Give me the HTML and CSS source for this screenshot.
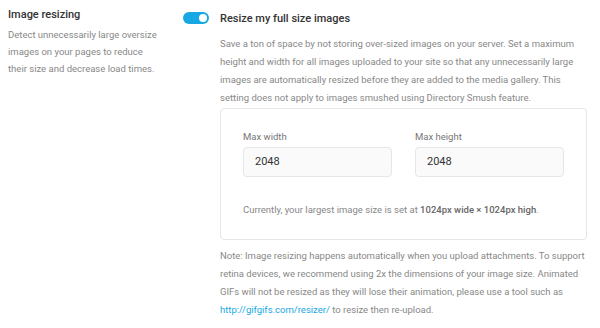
FILE: index.html
```html
<!DOCTYPE html>
<html>
<head>
<meta charset="utf-8">
<link rel="stylesheet" href="styles.css">
</head>
<body>
<div class="row">
  <div class="label-col">
    <h3 class="setting-title">Image resizing</h3>
    <p class="setting-desc">Detect unnecessarily large oversize<br> images on your pages to reduce<br> their size and decrease load times.</p>
  </div>
  <div class="content-col">
    <div class="toggle-row">
      <span class="toggle"><span class="knob"></span></span>
      <span class="toggle-label">Resize my full size images</span>
    </div>
    <div class="toggle-body">
      <p class="desc">Save a ton of space by not storing over-sized images on your server. Set a maximum height and width for all images uploaded to your site so that any unnecessarily large images are automatically resized before they are added to the media gallery. This setting does not apply to images smushed using Directory Smush feature.</p>
      <div class="box">
        <div class="fields">
          <div class="field">
            <label class="field-label">Max width</label>
            <div class="input">2048</div>
          </div>
          <div class="field">
            <label class="field-label">Max height</label>
            <div class="input">2048</div>
          </div>
        </div>
        <p class="current">Currently, your largest image size is set at <strong>1024px wide × 1024px high</strong>.</p>
      </div>
      <p class="note">Note: Image resizing happens automatically when you upload attachments. To support retina devices, we recommend using 2x the dimensions of your image size. Animated GIFs will not be resized as they will lose their animation, please use a tool such as <a href="#">http://gifgifs.com/resizer/</a> to resize then re-upload.</p>
    </div>
  </div>
</div>
</body>
</html>
```
FILE: styles.css
```css
* { box-sizing: border-box; }
body {
  margin: 0;
  background: #fff;
  font-family: Roboto, "Liberation Sans", sans-serif;
  color: #888;
}
.row {
  display: flex;
  padding: 8px 0 0 8px;
}
.label-col {
  width: 175px;
  flex: none;
}
.setting-title {
  margin: 0;
  font-size: 11px;
  line-height: 14px;
  font-weight: 500;
  color: #333;
}
.setting-desc {
  margin: 4px 0 0;
  font-size: 9.5px;
  line-height: 17px;
  color: #888;
}
.content-col {
  width: 404px;
  flex: none;
}
.toggle-row {
  display: flex;
  align-items: center;
  height: 20px;
}
.toggle {
  position: relative;
  width: 26px;
  height: 12px;
  border-radius: 6px;
  background: #17a8e3;
  flex: none;
}
.knob {
  position: absolute;
  right: 2px;
  top: 2px;
  width: 8px;
  height: 8px;
  border-radius: 50%;
  background: #fff;
}
.toggle-label {
  margin-left: 11px;
  font-size: 11px;
  font-weight: 500;
  color: #333;
}
.toggle-body {
  padding-left: 37px;
}
.desc, .note {
  margin: 7px 0 0;
  font-size: 9.5px;
  line-height: 18px;
  color: #888;
}
.box {
  margin-top: 1px;
  border: 1px solid #e6e6e6;
  border-radius: 4px;
  padding: 22px 22px 21px;
}
.fields {
  display: flex;
  gap: 23px;
}
.field {
  flex: 1;
}
.field-label {
  display: block;
  font-size: 9.5px;
  line-height: 12px;
  font-weight: 400;
  color: #777;
  margin-bottom: 4px;
}
.input {
  height: 30px;
  border: 1px solid #e6e6e6;
  border-radius: 4px;
  background: #fafafa;
  padding: 0 11px;
  font-size: 11px;
  line-height: 28px;
  color: #333;
}
.current {
  margin: 25px 0 0;
  font-size: 9.5px;
  line-height: 16px;
  color: #888;
}
.current strong {
  font-weight: 500;
  color: #666;
}
.note {
  margin-top: 7px;
}
.note a {
  color: #17a8e3;
  text-decoration: none;
}
```
